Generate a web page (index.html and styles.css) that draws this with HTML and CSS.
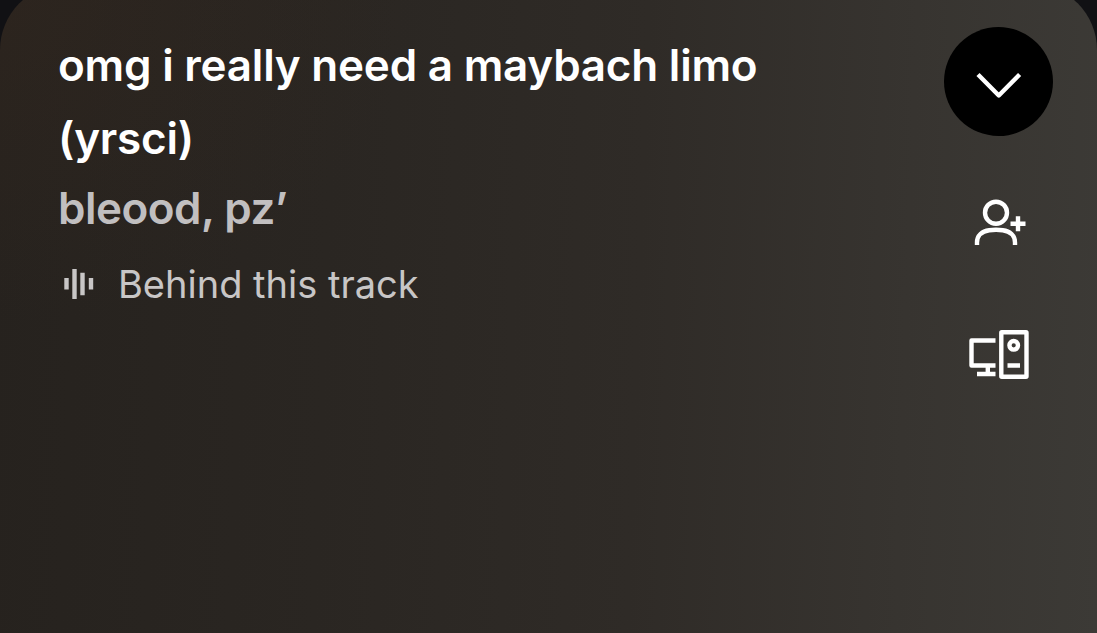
FILE: index.html
```
<!DOCTYPE html>
<html lang="en">
  <head>
    <meta charset="UTF-8" />
    <title>Now Playing</title>
    <link rel="stylesheet" href="styles.css">
  </head>
  <body>
    <div class="player-card">
      <div class="track-info">
        <h1 class="track-title">omg i really need a maybach limo (yrsci)</h1>
        <div class="track-artist">bleood, pz’</div>
        <div class="behind-track">
          <svg class="wave-icon" viewBox="0 0 30 30">
            <path d="M2.5 9v11.5M10.5 0v30M18.500 3.700v22.500M27 9v11.500" />
          </svg>
          <span>Behind this track</span>
        </div>
      </div>

      <div class="actions">
        <button class="collapse-btn" aria-label="Collapse">
          <svg class="icon" width="46" height="28" viewBox="0 0 46 28">
            <path d="M2 3.500L22.800 24.500L43.600 3.500" stroke-linejoin="round" />
          </svg>
        </button>
        <button class="icon-btn follow-btn" aria-label="Follow">
          <svg class="icon" width="60" height="50" viewBox="0 0 60 50">
            <circle cx="27" cy="14.700" r="11" />
            <path d="M8 47v-2.500c0-7 5-11.200 12.200-12.200q6.800-1 13.600 0c7.200 1 12.200 5.200 12.200 12.200v2.500M41.500 25.700h15M49 18.200v15" />
          </svg>
        </button>
        <button class="icon-btn devices-btn" aria-label="Devices">
          <svg class="icon" width="60" height="50" viewBox="0 0 60 50">
            <path d="M26.500 11.500H2.500v25H26.500M18.800 36v7M8 45h18.500M38.500 36.500h12.500" stroke-linejoin="round" />
            <rect x="32.300" y="3.300" width="25.200" height="44.400" rx="0.500" stroke-linejoin="round" />
            <circle cx="44.700" cy="16.300" r="4.300" />
          </svg>
        </button>
      </div>
    </div>
  </body>
</html>
```
FILE: styles.css
```
body {
  font-family: "Inter", "Liberation Sans", sans-serif;
  margin: 0;
  padding: 0;
  height: 633px;
  background-color: #111114;
  color: #fff;
  overflow: hidden;
}
.player-card {
  display: flex;
  justify-content: space-between;
  box-sizing: border-box;
  height: 649px;
  margin-top: -16px;
  padding: 43px 44px 0 58px;
  border-radius: 66px 66px 0 0;
  background:
    radial-gradient(ellipse 420px 340px at 0 0, rgba(54, 40, 30, 0.4), rgba(54, 40, 30, 0)),
    linear-gradient(92deg, #26221e 0%, #2a2622 30%, #2f2b27 58%, #373430 82%, #3c3a36 100%);
}
.track-info {
  width: 720px;
  padding-top: 1.5px;
}
.track-title {
  margin: 0;
  font-size: 44px;
  font-weight: 600;
  letter-spacing: -0.22px;
  line-height: 73px;
}
.track-artist {
  padding-top: 0.5px;
  color: #c1bfc0;
  font-size: 44px;
  font-weight: 600;
  letter-spacing: -0.5px;
  line-height: 67px;
}
.behind-track {
  display: flex;
  align-items: center;
  gap: 24px;
  margin-top: 14px;
  padding-left: 6px;
  color: #c8c6c6;
  font-size: 38px;
  line-height: 56px;
}
.wave-icon {
  width: 30px;
  height: 30px;
  fill: none;
  stroke: #c8c6c6;
  stroke-width: 4.4;
}
.actions {
  display: flex;
  flex-direction: column;
  align-items: center;
  width: 109px;
}
button {
  display: flex;
  justify-content: center;
  align-items: center;
  padding: 0;
  border: none;
  background: none;
  cursor: pointer;
}
.collapse-btn {
  width: 109px;
  height: 109px;
  border-radius: 50%;
  background-color: #000;
}
.collapse-btn .icon {
  margin-top: 6px;
}
.follow-btn {
  margin-top: 62px;
}
.devices-btn {
  margin-top: 81px;
}
.icon {
  display: block;
  fill: none;
  stroke: #fff;
  stroke-width: 4.4;
}
```
